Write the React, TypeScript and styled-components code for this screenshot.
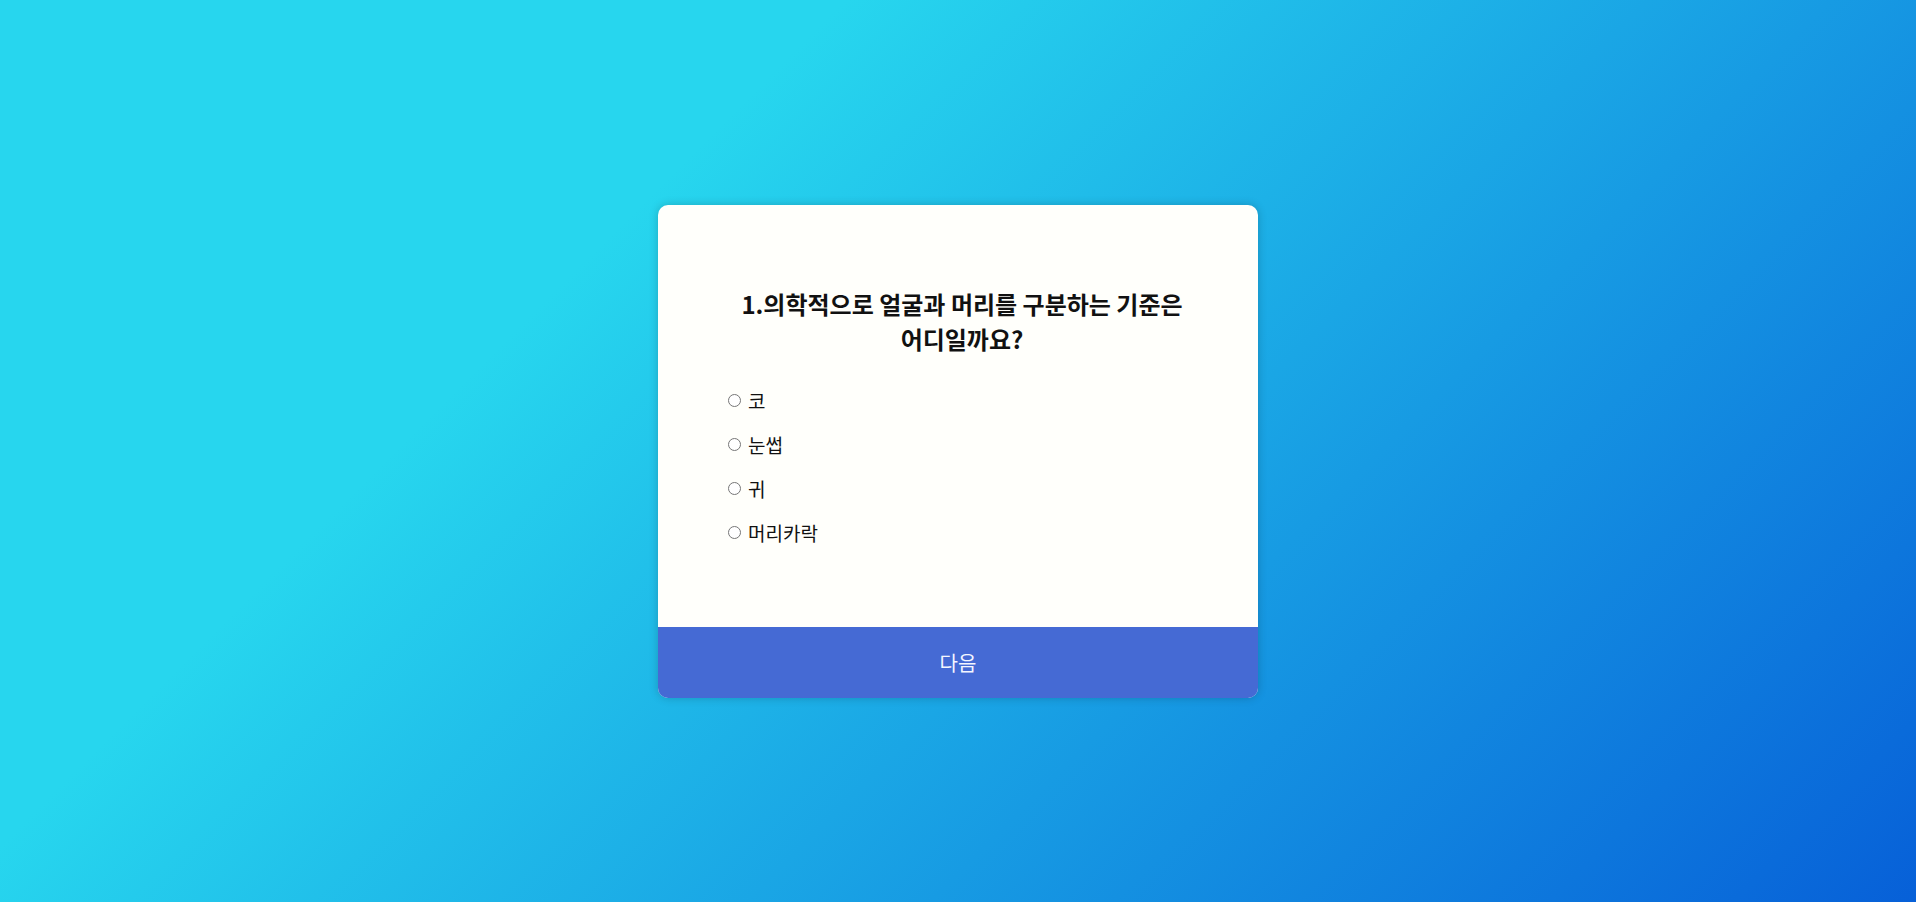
import React, { useState } from "react";
import styled, { createGlobalStyle } from "styled-components";

const GlobalStyle = createGlobalStyle`
  html, body {
    margin: 0;
    padding: 0;
  }
  body {
    font-family: "Noto Sans CJK KR", "Noto Sans", sans-serif;
  }
`;

const Wrapper = styled.div`
  min-height: 100vh;
  width: 100vw;
  display: flex;
  justify-content: center;
  align-items: center;
  background: linear-gradient(135deg, #27d6ee 30%, #0760d8 100%);
`;

const Card = styled.div`
  width: 600px;
  background-color: #fffffb;
  border-radius: 10px;
  overflow: hidden;
  box-shadow: 0 0 10px rgba(0, 0, 0, 0.2);
  display: flex;
  flex-direction: column;
`;

const Content = styled.div`
  padding: 81px 64px 82px;
  display: flex;
  flex-direction: column;
`;

const Question = styled.h2`
  margin: 0 auto;
  width: 480px;
  text-align: center;
  font-size: 24px;
  font-weight: 700;
  line-height: 35px;
  word-break: keep-all;
  color: #111;
`;

const OptionList = styled.ul`
  list-style: none;
  margin: 33px 0 0;
  padding: 0;
  display: flex;
  flex-direction: column;
  gap: 20px;
`;

const OptionLabel = styled.label`
  display: flex;
  align-items: center;
  height: 24px;
  font-size: 19px;
  color: #111;
  cursor: pointer;
`;

const Radio = styled.input`
  margin: 0 7px 0 6px;
  width: 13px;
  height: 13px;
`;

const NextButton = styled.button`
  height: 71px;
  width: 100%;
  border: none;
  background-color: #456ad4;
  color: #f4f6ff;
  font-family: "Noto Sans CJK KR", "Noto Sans", sans-serif;
  font-size: 20px;
  cursor: pointer;
`;

const options = ["코", "눈썹", "귀", "머리카락"];

function App() {
  const [picked, setPicked] = useState<string | null>(null);

  return (
    <>
      <GlobalStyle />
      <Wrapper>
        <Card>
          <Content>
            <Question>1.의학적으로 얼굴과 머리를 구분하는 기준은 어디일까요?</Question>
            <OptionList>
              {options.map((opt) => (
                <li key={opt}>
                  <OptionLabel>
                    <Radio
                      type="radio"
                      name="answer"
                      checked={picked === opt}
                      onChange={() => setPicked(opt)}
                    />
                    {opt}
                  </OptionLabel>
                </li>
              ))}
            </OptionList>
          </Content>
          <NextButton>다음</NextButton>
        </Card>
      </Wrapper>
    </>
  );
}

export default App;
